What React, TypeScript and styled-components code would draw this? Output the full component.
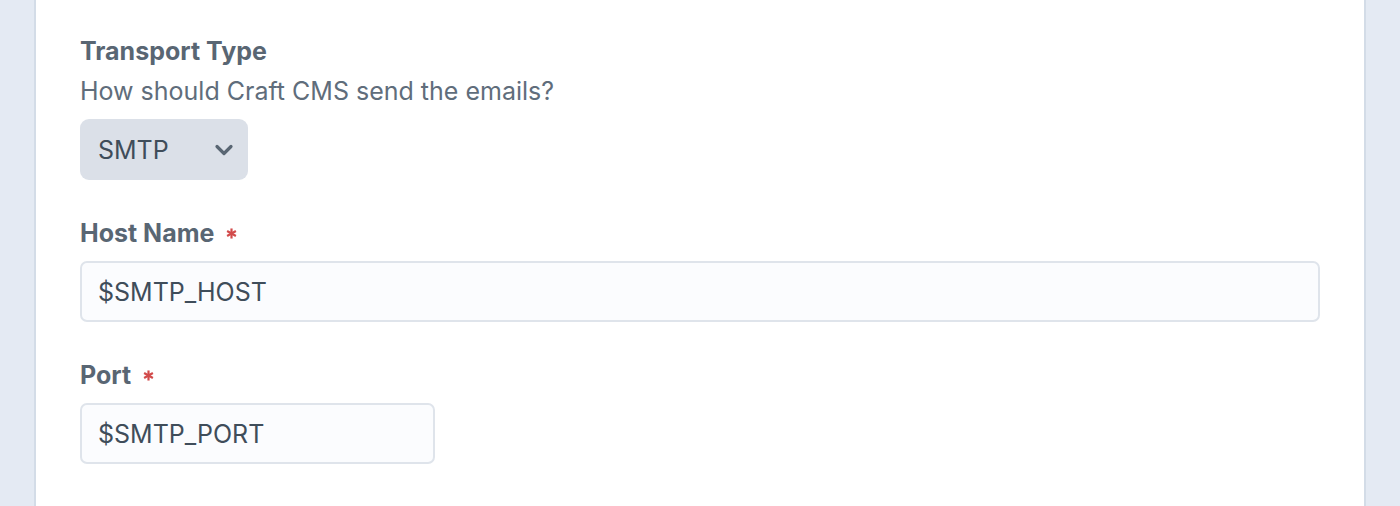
import React from "react";
import styled, { createGlobalStyle } from "styled-components";

const Global = createGlobalStyle`
  html, body { margin: 0; padding: 0; background: #e4eaf3; }
  body { font-family: Inter, "Noto Sans", sans-serif; -webkit-font-smoothing: antialiased; }
`;

const Page = styled.div`
  height: 506px;
  overflow: hidden;
  padding: 0 34px;
  display: flex;
`;

const Panel = styled.div`
  flex: 1;
  background: #ffffff;
  border-left: 2px solid #d3dce7;
  border-right: 2px solid #d3dce7;
  padding: 31px 44px 0 44px;
  display: flex;
  flex-direction: column;
  gap: 33px;
`;

const Field = styled.div`
  display: flex;
  flex-direction: column;
`;

const Heading = styled.div`
  display: flex;
  flex-direction: column;
  margin-bottom: 8px;
`;

const Label = styled.label`
  display: flex;
  align-items: center;
  gap: 12px;
  font-size: 25px;
  line-height: 40px;
  font-weight: 700;
  color: #596673;
`;

const Instructions = styled.div`
  font-size: 25px;
  line-height: 40px;
  color: #606d7b;
`;

const Required = styled.svg`
  width: 11px;
  height: 11px;
  margin-top: 0px;
`;

const SelectBox = styled.div`
  width: 168px;
  height: 61px;
  box-sizing: border-box;
  border-radius: 9px;
  background: #dbe0e8;
  display: flex;
  align-items: center;
  justify-content: space-between;
  padding: 0 13px 0 18px;
  font-size: 25px;
  color: #3f4d5a;
`;

const Input = styled.div<{ $width?: number }>`
  width: ${(p) => (p.$width ? `${p.$width}px` : "100%")};
  height: 61px;
  box-sizing: border-box;
  border: 2px solid #dfe4eb;
  border-radius: 7px;
  background: #fbfcfe;
  display: flex;
  align-items: center;
  padding: 0 16px;
  font-size: 25px;
  color: #3f4d5a;
`;

const Asterisk = () => (
  <Required viewBox="0 0 12 12">
    <g stroke="#d24b4b" strokeWidth="2.4" strokeLinecap="butt">
      <line x1="6" y1="0.5" x2="6" y2="11.5" />
      <line x1="1.2" y1="3.2" x2="10.8" y2="8.8" />
      <line x1="1.2" y1="8.8" x2="10.8" y2="3.2" />
    </g>
  </Required>
);

const Chevron = () => (
  <svg width="22" height="14" viewBox="0 0 22 14">
    <path d="M4 3.5 L11 10.5 L18 3.5" fill="none" stroke="#596673" strokeWidth="3.2" strokeLinecap="round" strokeLinejoin="round" />
  </svg>
);

export default function App() {
  return (
    <>
      <Global />
      <Page>
        <Panel>
          <Field>
            <Heading>
              <Label>Transport Type</Label>
              <Instructions>How should Craft CMS send the emails?</Instructions>
            </Heading>
            <SelectBox>
              <span>SMTP</span>
              <Chevron />
            </SelectBox>
          </Field>
          <Field>
            <Heading>
              <Label>
                Host Name <Asterisk />
              </Label>
            </Heading>
            <Input>$SMTP_HOST</Input>
          </Field>
          <Field>
            <Heading>
              <Label>
                Port <Asterisk />
              </Label>
            </Heading>
            <Input $width={355}>$SMTP_PORT</Input>
          </Field>
        </Panel>
      </Page>
    </>
  );
}
